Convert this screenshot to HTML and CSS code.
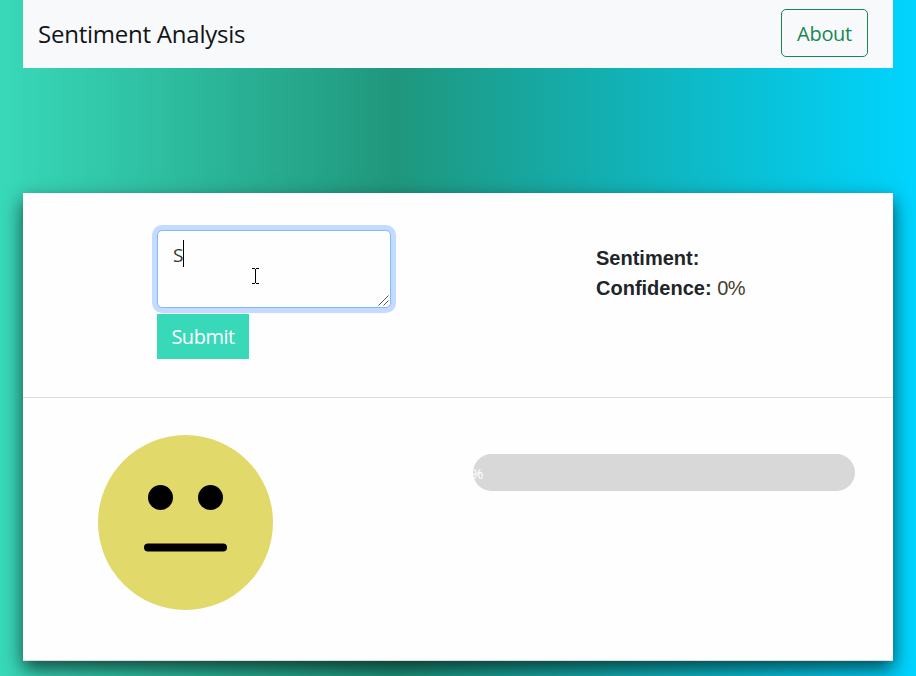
FILE: index.html
```html
<!DOCTYPE html>
<html lang="en">
<head>
<meta charset="utf-8">
<title>Sentiment Analysis</title>
<link rel="stylesheet" href="styles.css">
</head>
<body>
<div class="container">
  <nav class="navbar">
    <span class="brand">Sentiment Analysis</span>
    <button class="about" type="button">About</button>
  </nav>
  <main class="card">
    <section class="row top">
      <form class="entry">
        <div class="field">
          <textarea class="message" aria-label="Text">S</textarea>
          <span class="caret"></span>
          <svg class="pointer" width="7" height="16" viewBox="0 0 7 16" shape-rendering="crispEdges"><path d="M0 .5h3M4 .5h3M3.5 1v14M0 15.5h3M4 15.5h3" stroke="#000" fill="none"/></svg>
          <svg class="grip" width="11" height="11" viewBox="0 0 11 11"><path d="M.5 10.5l10-10M5.500 10.500l5-5" stroke="#555" fill="none"/></svg>
        </div>
        <button class="submit" type="button">Submit</button>
      </form>
      <div class="result">
        <div><b class="sentiment">Sentiment:</b></div>
        <div><b class="confidence">Confidence:</b> <span class="value">0%</span></div>
      </div>
    </section>
    <section class="row bottom">
      <svg class="face" width="175" height="175" viewBox="0 0 175 175">
        <circle cx="87.500" cy="87.500" r="87.500" fill="#e2d96b"/>
        <circle cx="62.500" cy="62.500" r="12.500"/>
        <circle cx="112.500" cy="62.500" r="12.500"/>
        <rect x="46" y="108.500" width="83" height="8" rx="4"/>
      </svg>
      <div class="progress"><div class="bar"><span>0%</span></div></div>
    </section>
  </main>
</div>
</body>
</html>
```
FILE: styles.css
```css
* { box-sizing: border-box; }
body {
  margin: 0;
  height: 676px;
  overflow: hidden;
  background: linear-gradient(90deg, #38d9b9 0%, #20977d 43%, #00d4ff 100%);
  font-family: "Open Sans", "Noto Sans", sans-serif;
  font-size: 20px;
  line-height: 30px;
  color: #212529;
}
.container { width: 870px; margin: 0 auto; }
.navbar {
  display: flex;
  align-items: center;
  justify-content: space-between;
  height: 68px;
  padding: 0 25px 2px 15px;
  background: #f8f9fa;
}
.brand { font-size: 24px; letter-spacing: -0.23px; color: #101418; padding-top: 1px; }
.about {
  width: 87px;
  height: 48px;
  padding: 2px 0 0;
  border: 1px solid #198754;
  border-radius: 5px;
  background: transparent;
  color: #198754;
  font: 20px/30px "Open Sans", "Noto Sans", sans-serif;
  letter-spacing: -0.3px;
}
.card {
  height: 468px;
  margin-top: 125px;
  background: #fefefe;
  border-bottom: 1px solid #dcdcdc;
  box-shadow: 0 8px 18px rgba(0, 0, 0, .65);
}
.row { display: flex; align-items: flex-start; }
.top { height: 205px; padding: 37px 0 0 134px; border-bottom: 1px solid #dcdcdc; }
.entry { width: 439px; }
.field { position: relative; width: 234px; height: 78px; }
.message {
  display: block;
  width: 234px;
  height: 78px;
  padding: 9px 15px;
  resize: none;
  outline: 0;
  border: 1px solid #86b7fe;
  border-radius: 5px;
  box-shadow: 0 0 0 5px #c2dbfe;
  background: #fefefe;
  color: #35382c;
  font: 19px/30px "Open Sans", "Noto Sans", sans-serif;
}
.caret { position: absolute; left: 26px; top: 10px; width: 1px; height: 27px; background: #000; }
.pointer { position: absolute; left: 95px; top: 38px; }
.grip { position: absolute; right: 2px; bottom: 2px; }
.submit {
  display: block;
  width: 92px;
  height: 45px;
  margin-top: 6px;
  padding: 1px 0 0;
  border: 0;
  background: #38d9b9;
  color: #fff;
  font: 20px/30px "Open Sans", "Noto Sans", sans-serif;
  letter-spacing: -0.5px;
}
.result { padding-top: 13px; font-family: "Liberation Sans", sans-serif; white-space: nowrap; }
.value { color: #3f412c; letter-spacing: -0.4px; }
.bottom { padding: 37px 38px 0 75px; justify-content: space-between; }
.face { display: block; }
.progress {
  width: 382px;
  height: 37px;
  margin-top: 19px;
  border-radius: 19px;
  overflow: hidden;
  background: #d8d8d8;
}
.bar {
  display: flex;
  justify-content: center;
  align-items: center;
  width: 0;
  height: 37px;
  color: #fff;
  font-size: 15px;
}
```
